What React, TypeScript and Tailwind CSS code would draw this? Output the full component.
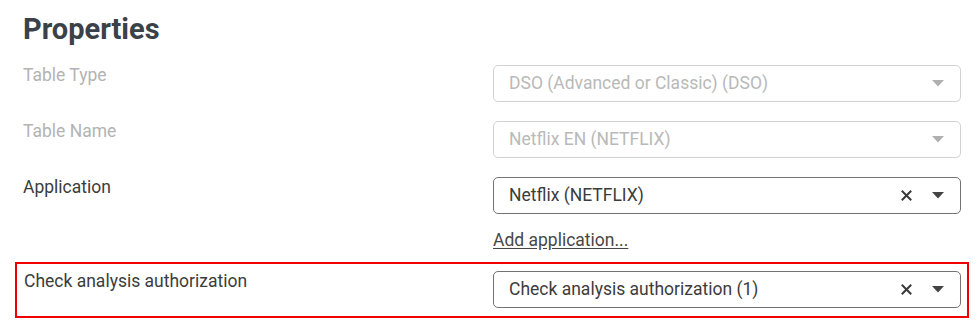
import React from "react";

function Caret({ color }: { color: string }) {
  return (
    <svg width="12" height="7" viewBox="0 0 12 7" className="shrink-0">
      <path d="M0 0 L12 0 L6 6.5 Z" fill={color} />
    </svg>
  );
}

function ClearX() {
  return (
    <svg width="11" height="11" viewBox="0 0 11 11" className="shrink-0">
      <path d="M1.5 1.5 L9.5 9.5 M9.5 1.5 L1.5 9.5" stroke="#3a3a3a" strokeWidth="2" strokeLinecap="square" />
    </svg>
  );
}

function Select({ value, disabled, clearable }: { value: string; disabled?: boolean; clearable?: boolean }) {
  return (
    <div
      className={
        "flex h-[37px] items-center rounded-[5px] border pl-[15px] pr-[16px] " +
        (disabled ? "border-[#d2d2d2] text-[#b9b9b9]" : "border-[#737373] text-[#3c3c3c]")
      }
    >
      <span className="flex-1 truncate text-[17.5px] leading-[21px]">{value}</span>
      {clearable && (
        <span className="mr-[20px] flex items-center">
          <ClearX />
        </span>
      )}
      <Caret color={disabled ? "#b0b0b0" : "#444444"} />
    </div>
  );
}

function Row({ label, disabled, children }: { label: string; disabled?: boolean; children: React.ReactNode }) {
  return (
    <div className="grid grid-cols-[1fr_468px]">
      <div className={"text-[17.5px] leading-[21px] " + (disabled ? "text-[#b3b3b3]" : "text-[#3c3c3c]")}>{label}</div>
      <div>{children}</div>
    </div>
  );
}

export default function App() {
  return (
    <div className="min-h-[333px] w-[977px] bg-white pl-[23px] pr-[16px] pt-[12px]" style={{ fontFamily: "Roboto, 'Noto Sans', sans-serif" }}>
      <h2 className="text-[29px] font-bold leading-[34px] text-[#3b4148]">Properties</h2>
      <div className="mt-[19px]">
        <Row label="Table Type" disabled>
          <Select value="DSO (Advanced or Classic) (DSO)" disabled />
        </Row>
      </div>
      <div className="mt-[19px]">
        <Row label="Table Name" disabled>
          <Select value="Netflix EN (NETFLIX)" disabled />
        </Row>
      </div>
      <div className="mt-[19px]">
        <Row label="Application">
          <Select value="Netflix (NETFLIX)" clearable />
        </Row>
      </div>
      <div className="mt-[16px] grid grid-cols-[1fr_468px]">
        <div />
        <a className="text-[17.5px] leading-[21px] text-[#474747] underline underline-offset-[2px]" href="#">
          Add application...
        </a>
      </div>
      <div className="-mx-[8px] mt-[11px] border-2 border-[#f00000] pb-[8px] pl-[7px] pr-[6px] pt-[7px]">
        <Row label="Check analysis authorization">
          <Select value="Check analysis authorization (1)" clearable />
        </Row>
      </div>
    </div>
  );
}
